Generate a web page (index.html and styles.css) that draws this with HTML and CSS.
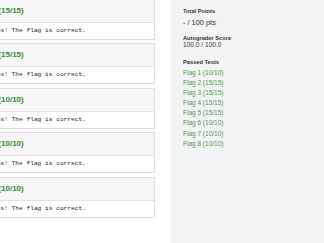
FILE: index.html
```html
<!DOCTYPE html>
<html lang="en">
<head>
<meta charset="UTF-8">
<meta name="viewport" content="width=device-width, initial-scale=1.0">
<title>Autograder Results</title>
<link rel="stylesheet" href="styles.css">
</head>
	<body>
		<div class="results">

			<div class="test">
				<div class="test-head">Flag 4 (15/15)</div>
				<div class="test-body">Congratulations! The flag is correct.</div>
			</div>

			<div class="test">
				<div class="test-head">Flag 5 (15/15)</div>
				<div class="test-body">Congratulations! The flag is correct.</div>
			</div>

			<div class="test">
				<div class="test-head">Flag 6 (10/10)</div>
				<div class="test-body">Congratulations! The flag is correct.</div>
			</div>

			<div class="test">
				<div class="test-head">Flag 7 (10/10)</div>
				<div class="test-body">Congratulations! The flag is correct.</div>
			</div>

			<div class="test">
				<div class="test-head">Flag 8 (10/10)</div>
				<div class="test-body">Congratulations! The flag is correct.</div>
			</div>

		</div>

		<div class="sidebar">
			<div class="label first">Total Points</div>
			<div class="points">- / 100 pts</div>

			<div class="label second">Autograder Score</div>
			<div class="score">100.0 / 100.0</div>

			<div class="label third">Passed Tests</div>
			<ul class="passed">
				<li>Flag 1 (10/10)</li>
				<li>Flag 2 (15/15)</li>
				<li>Flag 3 (15/15)</li>
				<li>Flag 4 (15/15)</li>
				<li>Flag 5 (15/15)</li>
				<li>Flag 6 (10/10)</li>
				<li>Flag 7 (10/10)</li>
				<li>Flag 8 (10/10)</li>
			</ul>
		</div>
	</body>
</html>
```

FILE: styles.css
```css
html {
    margin: 0;
    padding: 0;
    height: 100%;
}

body {
    margin: 0;
    height: 100%;
    display: flex;
    background-color: #fff;
    color: #333;
    font-family: "Liberation Sans", Arial, sans-serif;
    overflow: hidden;
}

.results {
    flex: 0 0 215px;
    margin-left: -60px;
    margin-right: 16px;
    margin-top: -1.5px;
}

.test {
    border: 1px solid #dedede;
    margin-bottom: 3.5px;
    background-color: #fff;
}

.test-head {
    height: 22px;
    line-height: 22px;
    padding-left: 32px;
    background-color: #f6f6f6;
    border-bottom: 1px solid #e2e2e2;
    color: #38872f;
    font-size: 8px;
    font-weight: bold;
    white-space: nowrap;
}

.test-body {
    height: 16px;
    line-height: 16px;
    padding-left: 7.5px;
    font-family: "Liberation Mono", "Courier New", monospace;
    font-size: 6.2px;
    color: #222;
    white-space: nowrap;
}

.sidebar {
    flex: 1;
    background-color: #f2f3f5;
    padding-left: 12px;
    padding-top: 7px;
}

.label {
    font-size: 5.7px;
    font-weight: bold;
    line-height: 8px;
    color: #333;
}

.points {
    font-size: 7.4px;
    line-height: 8px;
    margin-top: 3.5px;
}

.label.second {
    margin-top: 7.5px;
}

.score {
    font-size: 6.6px;
    line-height: 8px;
    margin-top: -1px;
}

.label.third {
    margin-top: 9px;
}

.passed {
    list-style: none;
    margin: 2px 0 0 0;
    padding: 0;
}

.passed li {
    font-size: 6.5px;
    line-height: 10.1px;
    color: #4b9a45;
}
```
